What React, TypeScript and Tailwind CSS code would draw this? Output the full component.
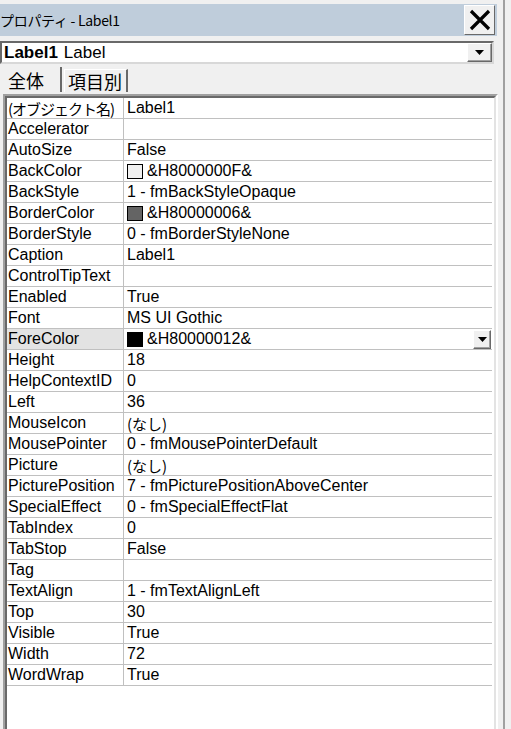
import React from "react";

type Row = {
  name: string;
  value: string;
  swatch?: string;
  selected?: boolean;
};

const rows: Row[] = [
  { name: "(オブジェクト名)", value: "Label1" },
  { name: "Accelerator", value: "" },
  { name: "AutoSize", value: "False" },
  { name: "BackColor", value: "&H8000000F&", swatch: "#f0f0f0" },
  { name: "BackStyle", value: "1 - fmBackStyleOpaque" },
  { name: "BorderColor", value: "&H80000006&", swatch: "#646464" },
  { name: "BorderStyle", value: "0 - fmBorderStyleNone" },
  { name: "Caption", value: "Label1" },
  { name: "ControlTipText", value: "" },
  { name: "Enabled", value: "True" },
  { name: "Font", value: "MS UI Gothic" },
  { name: "ForeColor", value: "&H80000012&", swatch: "#000000", selected: true },
  { name: "Height", value: "18" },
  { name: "HelpContextID", value: "0" },
  { name: "Left", value: "36" },
  { name: "MouseIcon", value: "(なし)" },
  { name: "MousePointer", value: "0 - fmMousePointerDefault" },
  { name: "Picture", value: "(なし)" },
  { name: "PicturePosition", value: "7 - fmPicturePositionAboveCenter" },
  { name: "SpecialEffect", value: "0 - fmSpecialEffectFlat" },
  { name: "TabIndex", value: "0" },
  { name: "TabStop", value: "False" },
  { name: "Tag", value: "" },
  { name: "TextAlign", value: "1 - fmTextAlignLeft" },
  { name: "Top", value: "30" },
  { name: "Visible", value: "True" },
  { name: "Width", value: "72" },
  { name: "WordWrap", value: "True" },
];

const jp = { fontFamily: '"Noto Sans CJK JP", sans-serif', fontSize: "15px" };

function DropButton({ className }: { className: string }) {
  return (
    <div
      className={`flex items-center justify-center bg-[#f0f0f0] border border-t-white border-l-white border-r-[#696969] border-b-[#696969] shadow-[inset_-1px_-1px_0_#a0a0a0] ${className}`}
    >
      <svg width="9" height="5" viewBox="0 0 9 5">
        <path d="M0 0h9L4.5 5z" fill="#000" />
      </svg>
    </div>
  );
}

export default function App() {
  return (
    <div
      className="w-[511px] h-[729px] overflow-hidden bg-[#f0f0f0] text-black"
      style={{ fontFamily: '"Liberation Sans", "Noto Sans CJK JP", sans-serif' }}
    >
      <div className="flex w-[505px] flex-col border-r-2 border-r-[#a0a0a0] pt-1">
        {/* title bar */}
        <div className="flex h-[32px] w-[497px] items-center justify-between bg-[#bfcddb]">
          <span
            className="whitespace-nowrap text-[14px] leading-none tracking-[-0.3px]"
            style={{ fontFamily: '"Noto Sans CJK JP", sans-serif' }}
          >
            プロパティ - Label1
          </span>
          <div className="mr-[2px] flex h-[30px] w-[31px] items-center justify-center border border-t-white border-l-white border-r-[#696969] border-b-[#696969] bg-[#f0f0f0]">
            <svg width="22" height="22" viewBox="0 0 22 22">
              <path d="M2 2L20 20M20 2L2 20" stroke="#000" strokeWidth="3.2" />
            </svg>
          </div>
        </div>

        {/* object combo */}
        <div className="mt-[5px] flex h-[23px] w-[494px] items-center border-2 border-t-[#696969] border-l-[#696969] border-r-[#d8d8d8] border-b-[#d8d8d8] bg-white">
          <span className="pl-[2px] text-[17px] font-bold leading-none">Label1</span>
          <span className="pl-[6px] text-[17px] leading-none">Label</span>
          <DropButton className="ml-auto h-[19px] w-[25px]" />
        </div>

        {/* tabs */}
        <div
          className="mt-[3px] flex h-[25px] items-end text-[18px]"
          style={{ fontFamily: '"Noto Sans CJK JP", sans-serif' }}
        >
          <div className="flex h-[25px] w-[62px] items-center border-r-2 border-r-[#696969] pl-[8px] leading-none">
            全体
          </div>
          <div className="ml-[2px] flex h-[23px] w-[64px] items-center border-l border-t border-l-white border-t-white border-r-2 border-r-[#696969] pl-[3px] leading-none">
            項目別
          </div>
        </div>

        {/* property grid */}
        <div className="ml-[3px] mt-[2px] flex h-[660px] w-[495px] border-2 border-t-[#a0a0a0] border-l-[#a0a0a0] border-r-white border-b-white">
          <div className="flex flex-1 border-2 border-t-[#696969] border-l-[#696969] border-r-[#e3e3e3] border-b-[#e3e3e3] bg-white">
            <div className="flex flex-1 flex-col pr-[2px]">
              {rows.map((r) => (
                <div
                  key={r.name}
                  className="flex h-[21px] border-b border-b-[#c0c0c0] text-[16px] leading-none"
                >
                  <div
                    className={`flex w-[117px] shrink-0 items-center overflow-hidden whitespace-nowrap border-r border-r-[#c0c0c0] pl-[1px] ${r.selected ? "bg-[#e3e3e3]" : ""}`}
                  >
                    {r.name.startsWith("(") ? (
                      <span style={jp} className="tracking-[-1px]">
                        {r.name}
                      </span>
                    ) : (
                      r.name
                    )}
                  </div>
                  <div className="flex flex-1 items-center whitespace-nowrap pl-[3px]">
                    {r.swatch && (
                      <span
                        className="mr-[4px] inline-block h-[15px] w-[16px] border border-black"
                        style={{ backgroundColor: r.swatch }}
                      />
                    )}
                    <span style={r.value.startsWith("(") ? jp : undefined}>{r.value}</span>
                    {r.selected && <DropButton className="ml-auto mr-[1px] h-[19px] w-[18px]" />}
                  </div>
                </div>
              ))}
            </div>
          </div>
        </div>
      </div>
    </div>
  );
}
